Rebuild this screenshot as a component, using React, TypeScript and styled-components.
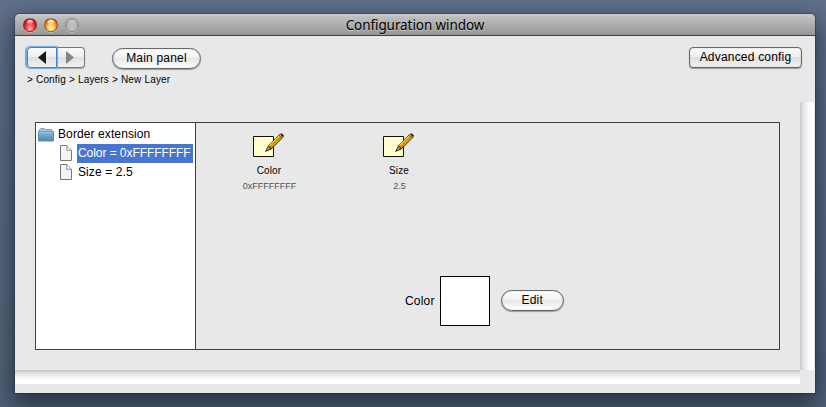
import React from "react";
import styled, { createGlobalStyle } from "styled-components";

const GlobalStyle = createGlobalStyle`
  * { box-sizing: border-box; }
  html, body, #root { margin: 0; width: 100%; height: 100%; overflow: hidden; }
  body { font-family: "Liberation Sans", Arial, sans-serif; color: #000; }
  svg { flex: none; }
`;

const Desktop = styled.main`
  width: 826px;
  height: 407px;
  padding: 14px 11px 14px 15px;
  overflow: hidden;
  background: linear-gradient(#61708b, #576980 70%, #52647a);
`;

const Window = styled.section`
  height: 379px;
  display: flex;
  flex-direction: column;
  background: #e8e8e8;
  border-radius: 5px 5px 0 0;
  box-shadow: 0 0 1px 1px rgba(30, 36, 52, 0.4), 0 10px 24px 4px rgba(15, 20, 30, 0.6);
`;

const TitleBar = styled.header`
  height: 22px;
  flex: none;
  display: grid;
  grid-template-columns: 70px 1fr 70px;
  align-items: center;
  background: linear-gradient(#d0d0d0, #c1c1c1 2px, #969696);
  border-bottom: 1px solid #404040;
  border-radius: 5px 5px 0 0;
`;

const Lights = styled.div`
  display: flex;
  gap: 7px;
  padding: 1px 0 0 8px;
`;

const lightFills = {
  red: "radial-gradient(ellipse at 50% 85%, #ffb5b0 0, #fb5b5b 35%, #dc2028 62%, #a8121a 90%)",
  amber: "radial-gradient(ellipse at 50% 85%, #fff6a6 0, #ffd05c 38%, #e98b28 65%, #ad5410 92%)",
  gray: "radial-gradient(ellipse at 50% 85%, #c9c9c9, #a6a6a6)",
};

const Light = styled.span<{ $tone: keyof typeof lightFills }>`
  width: 14px;
  height: 14px;
  display: flex;
  justify-content: center;
  padding-top: 1px;
  border-radius: 50%;
  border: 1px solid ${p => (p.$tone === "gray" ? "#858585" : "rgba(95,45,40,.55)")};
  background: ${p => lightFills[p.$tone]};
  box-shadow: 0 1px 0 rgba(255,255,255,.35);
  &::before {
    content: "";
    width: 6px;
    height: 4px;
    border-radius: 50%;
    background: linear-gradient(rgba(255,255,255,${p => (p.$tone === "gray" ? 0.25 : 0.9)}), rgba(255,255,255,.15));
  }
`;

const Title = styled.h1`
  margin: 0;
  text-align: center;
  font: 400 13.5px/20px "Noto Sans", "Open Sans", sans-serif;
  letter-spacing: -0.08px;
  text-shadow: 0 1px 0 rgba(255,255,255,.4);
  white-space: nowrap;
`;

const Toolbar = styled.nav`
  height: 66px;
  flex: none;
  padding: 11px 13px 0 12px;
`;

const ToolRow = styled.div`
  height: 22px;
  display: flex;
  align-items: flex-start;
`;

const Segments = styled.div`
  width: 58px;
  display: flex;
  margin-right: 27px;
`;

const NavButton = styled.button<{ $focused?: boolean }>`
  width: ${p => (p.$focused ? 30 : 28)}px;
  height: 21px;
  padding: 0 ${p => (p.$focused ? 0 : 1)}px 0 0;
  display: flex;
  align-items: center;
  justify-content: center;
  border: 1px solid ${p => (p.$focused ? "#4388c4" : "#777")};
  border-left-width: ${p => (p.$focused ? 1 : 0)}px;
  border-radius: ${p => (p.$focused ? "4px 0 0 4px" : "0 4px 4px 0")};
  background: linear-gradient(#fafafa, #ededed 48%, #dfdfdf 50%, #f2f2f2);
  box-shadow: ${p => (p.$focused ? "-0.5px 0 1px 1px #70a9dc" : "0 1px 1px #aaa")};
  z-index: ${p => (p.$focused ? 1 : 0)};
`;

const Button = styled.button<{ $width: number; $square?: boolean }>`
  width: ${p => p.$width}px;
  height: 21px;
  padding: 0 0 2px;
  font: 12px/16px "Liberation Sans", Arial, sans-serif;
  letter-spacing: 0.2px;
  color: #000;
  white-space: nowrap;
  border: 1px solid #686868;
  border-radius: ${p => (p.$square ? 4 : 11)}px;
  background: ${p => p.$square
    ? "linear-gradient(#fbfbfb, #ededed 48%, #dedede 50%, #f3f3f3)"
    : "linear-gradient(#fff, #f1f1f1 48%, #e7e7e7 50%, #fff)"};
  box-shadow: 0 1px 1px #999, inset 0 0 1px #777;
`;

const MainButton = styled(Button)`
  margin-top: 1px;
`;

const AdvancedButton = styled(Button)`
  margin-left: auto;
`;

const EditButton = styled(Button)`
  margin-bottom: 2px;
  padding-bottom: 1px;
`;

const Breadcrumb = styled.div`
  margin-top: 5px;
  font-size: 10px;
  line-height: 12px;
  letter-spacing: 0.18px;
`;

const Viewport = styled.div`
  height: 290px;
  display: grid;
  grid-template-columns: 785px 14px;
  grid-template-rows: 268px 14px;
`;

const Content = styled.div`
  padding: 20px;
`;

const VerticalTrack = styled.div`
  background: linear-gradient(90deg, #c8c8c8, #e2e2e2 3px, #f8f8f8 8px, #fff 10px);
`;

const HorizontalTrack = styled.div`
  background: linear-gradient(#c4c4c4, #e0e0e0 3px, #f8f8f8 8px, #fff 10px);
`;

const Panel = styled.div`
  width: 745px;
  height: 228px;
  display: grid;
  grid-template-columns: 160px 1fr;
  border: 1px solid #404040;
`;

const Tree = styled.div`
  padding-top: 2px;
  background: #fff;
  border-right: 1px solid #404040;
`;

const TreeRow = styled.div<{ $child?: boolean }>`
  height: 19px;
  display: flex;
  align-items: center;
  gap: ${p => (p.$child ? 5 : 3)}px;
  padding-left: ${p => (p.$child ? 24 : 2)}px;
  svg { margin-bottom: ${p => (p.$child ? 1 : 0)}px; }
`;

const TreeLabel = styled.span<{ $selected?: boolean }>`
  width: ${p => (p.$selected ? "116px" : "auto")};
  height: 19px;
  flex: none;
  padding: 0 3px 0 1px;
  font-size: 12px;
  line-height: 19px;
  letter-spacing: ${p => (p.$selected ? -0.06 : 0.1)}px;
  white-space: nowrap;
  color: ${p => (p.$selected ? "#fff" : "#000")};
  background: ${p => (p.$selected ? "#4675d2" : "transparent")};
`;

const Details = styled.div`
  display: flex;
  flex-direction: column;
`;

const Properties = styled.div`
  height: 153px;
  display: flex;
  padding: 9px 0 0 8px;
`;

const Property = styled.div`
  width: 130px;
  display: flex;
  flex-direction: column;
  align-items: center;
  font-size: 10px;
  letter-spacing: 0.1px;
`;

const PropertyName = styled.span`
  margin-top: 4px;
  line-height: 13px;
`;

const PropertyValue = styled.span`
  margin: 3px 0 0 1px;
  font-size: 9px;
  line-height: 13px;
  letter-spacing: 0;
  color: #505050;
`;

const Editor = styled.div`
  display: flex;
  align-items: center;
  margin-left: 209px;
  font-size: 12px;
  letter-spacing: 0.2px;
`;

const Swatch = styled.div`
  width: 50px;
  height: 50px;
  margin: 0 11px 0 5px;
  border: 1px solid #000;
  background: #fff;
`;

const Arrow = ({ forward = false }: { forward?: boolean }) => (
  <svg width="8" height="13" viewBox="0 0 8 13">
    <path d={forward ? "M0 0v13l8-6.5z" : "M8 0v13L0 6.5z"} fill={forward ? "#858585" : "#181818"} />
  </svg>
);

const FolderIcon = () => (
  <svg width="16" height="15" viewBox="0 0 16 15">
    <defs>
      <linearGradient id="folder" x2="0" y2="1">
        <stop stopColor="#8db8d7" /><stop offset="1" stopColor="#4c88b1" />
      </linearGradient>
    </defs>
    <path d="M1.5 5V2.5l1-1h4l1 1h6l1 1V5" fill="#a0c4dc" stroke="#7ba5c2" />
    <path d="M.5 4.5h15v9.5H.5z" fill="url(#folder)" stroke="#5a8fb4" />
    <path d="M1 5.2h14" stroke="#a5c8df" />
  </svg>
);

const FileIcon = () => (
  <svg width="12" height="16" viewBox="0 0 12 16">
    <path d="M.5.5h6.3l4.7 4.7v10.3H.5z" fill="#f4f4f4" stroke="#777" />
    <path d="M6.8.8v4.4h4.4" fill="#fff" stroke="#888" />
  </svg>
);

const EditIcon = () => (
  <svg width="32" height="28" viewBox="0 0 32 28">
    <path d="M.5 4.5h20v20H.5z" fill="#ffffcd" stroke="#111" />
    <path d="m12 20 2.8-6L26.5 2.3l2-1 2.4 2.2-.7 1.9-12 12z" fill="#151515" />
    <path d="m15.2 14.1 2.7 2.6-4.5 2.1z" fill="#ad8461" />
    <path d="m15.7 13.6 11.4-11.4 2.9 2.7-11.5 11.4z" fill="#dfae12" />
    <path d="m16.5 13.7 11.1-11.1" stroke="#ffd444" strokeWidth="1" />
    <path d="m17.5 15 11-11" stroke="#5d4508" strokeWidth=".9" strokeDasharray="1 1" />
    <path d="m26.1 3.4 2.6 2.5" stroke="#785022" />
  </svg>
);

const properties = [
  { name: "Color", value: "0xFFFFFFFF" },
  { name: "Size", value: "2.5" },
];

export default function App() {
  return (
    <>
      <GlobalStyle />
      <Desktop>
        <Window>
          <TitleBar>
            <Lights><Light $tone="red" /><Light $tone="amber" /><Light $tone="gray" /></Lights>
            <Title>Configuration window</Title>
          </TitleBar>
          <Toolbar>
            <ToolRow>
              <Segments>
                <NavButton $focused aria-label="Back"><Arrow /></NavButton>
                <NavButton aria-label="Forward"><Arrow forward /></NavButton>
              </Segments>
              <MainButton $width={89}>Main panel</MainButton>
              <AdvancedButton $width={113} $square>Advanced config</AdvancedButton>
            </ToolRow>
            <Breadcrumb>&gt; Config &gt; Layers &gt; New Layer</Breadcrumb>
          </Toolbar>
          <Viewport>
            <Content>
              <Panel>
                <Tree>
                  <TreeRow><FolderIcon /><TreeLabel>Border extension</TreeLabel></TreeRow>
                  <TreeRow $child><FileIcon /><TreeLabel $selected>Color = 0xFFFFFFFF</TreeLabel></TreeRow>
                  <TreeRow $child><FileIcon /><TreeLabel>Size = 2.5</TreeLabel></TreeRow>
                </Tree>
                <Details>
                  <Properties>
                    {properties.map(p => (
                      <Property key={p.name}>
                        <EditIcon />
                        <PropertyName>{p.name}</PropertyName>
                        <PropertyValue>{p.value}</PropertyValue>
                      </Property>
                    ))}
                  </Properties>
                  <Editor><span>Color</span><Swatch /><EditButton $width={63}>Edit</EditButton></Editor>
                </Details>
              </Panel>
            </Content>
            <VerticalTrack />
            <HorizontalTrack />
          </Viewport>
        </Window>
      </Desktop>
    </>
  );
}
